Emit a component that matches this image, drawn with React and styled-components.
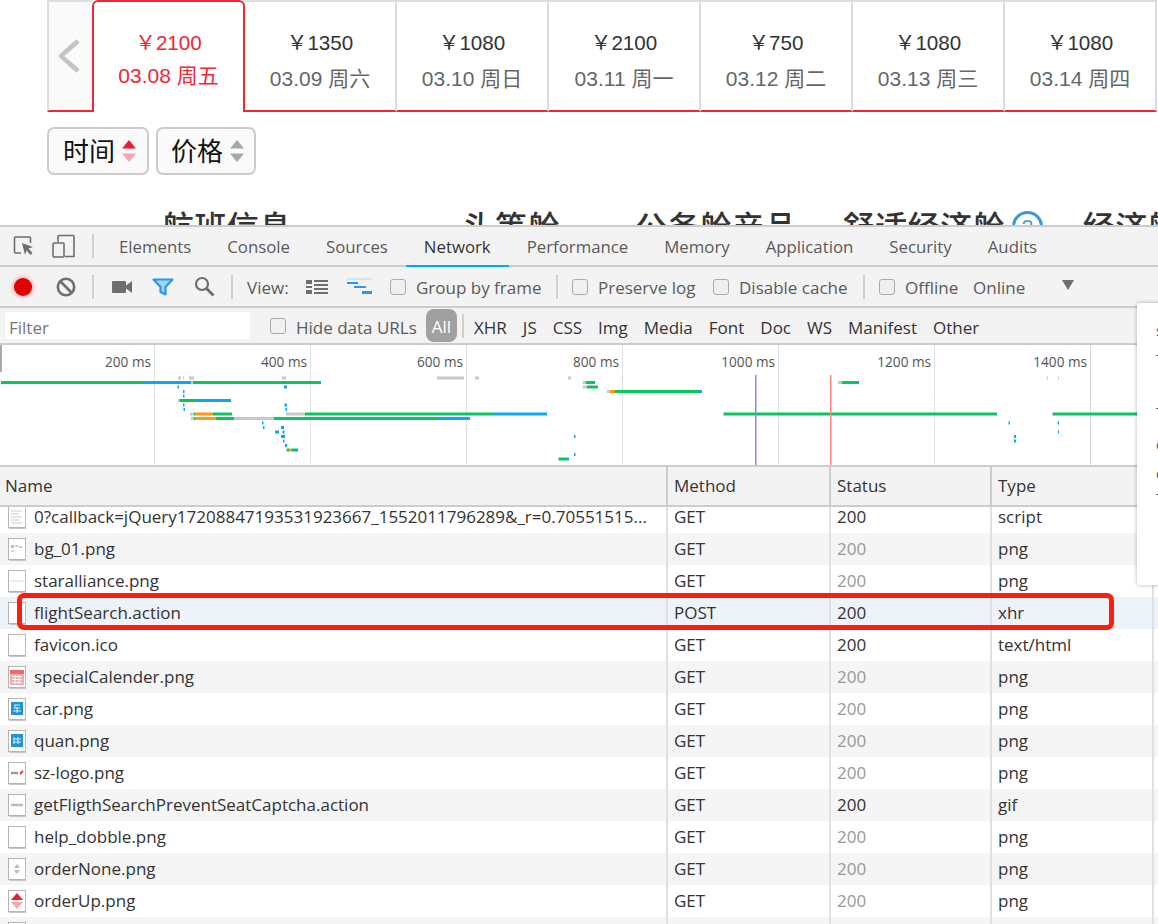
import styled, { createGlobalStyle } from 'styled-components';

const GlobalStyle = createGlobalStyle`
  html, body {
    margin: 0;
    background: #fff;
  }
  #root {
    width: 1158px;
    height: 924px;
    overflow: hidden;
    position: relative;
  }
`;

const days = [
  { price: '2100', date: '03.08 周五', active: true },
  { price: '1350', date: '03.09 周六' },
  { price: '1080', date: '03.10 周日' },
  { price: '2100', date: '03.11 周一' },
  { price: '750', date: '03.12 周二' },
  { price: '1080', date: '03.13 周三' },
  { price: '1080', date: '03.14 周四' },
];

const panels = [
  { label: 'Elements' },
  { label: 'Console' },
  { label: 'Sources' },
  { label: 'Network', active: true },
  { label: 'Performance' },
  { label: 'Memory' },
  { label: 'Application' },
  { label: 'Security' },
  { label: 'Audits' },
];

const filters = ['XHR', 'JS', 'CSS', 'Img', 'Media', 'Font', 'Doc', 'WS', 'Manifest', 'Other'];

const G = '#0cc45c';
const B = '#0aa7f5';
const O = '#f99b14';
const L = '#c8c8c8';

// [row, from, to, colour]
const bars = [
  [0, 178, 181, L], [0, 183, 184, L], [0, 189, 194, L], [0, 282, 286, L], [0, 437, 464, L], [0, 475, 479, L],
  [0, 568, 571, L], [0, 622, 623, L], [0, 1047, 1048, L], [0, 1058, 1059, L],
  [1, 1, 143, G], [1, 143, 191, B], [1, 191, 193, L], [1, 193, 319, G], [1, 319, 321, B],
  [1, 583, 586, L], [1, 586, 594, G], [1, 594, 595, B], [1, 838, 842, L], [1, 842, 857, G], [1, 857, 859, B],
  [2, 177.5, 179, B], [2, 284, 287, B], [2, 583, 587, L], [2, 587, 597, G], [2, 597, 598, B],
  [3, 183, 184.5, B], [3, 607, 610, L], [3, 610, 615, O], [3, 615, 700, G], [3, 700, 702, B],
  [4, 183, 184.5, B],
  [5, 178, 179.5, L], [5, 179.5, 195, G], [5, 195, 231, B],
  [6, 183, 184.5, B], [6, 284.5, 287, B],
  [7, 183.5, 185, B], [7, 285.5, 287, B],
  [8, 190, 194, L], [8, 194, 195, G], [8, 195, 213, O], [8, 213, 231, G], [8, 231, 232, B],
  [8, 286, 305, L], [8, 305, 494, G], [8, 494, 547, B], [8, 723, 724, L], [8, 724, 995, G], [8, 995, 997, B],
  [8, 1052, 1053, L], [8, 1053, 1138, G],
  [9, 191, 194, L], [9, 194, 195, G], [9, 195, 216, O], [9, 216, 233, G], [9, 233, 234, B],
  [9, 234, 274, L], [9, 274, 438, G], [9, 438, 470, B],
  [10, 262, 263.5, B], [10, 1008.5, 1010, B], [10, 1057.5, 1059, B],
  [11, 263, 264.5, B], [11, 281, 284, B],
  [12, 275, 279, B], [12, 282.5, 284.5, B], [12, 1058, 1059, B],
  [13, 281, 285, B], [13, 574, 575.5, B], [13, 1014, 1016, B],
  [14, 283, 284.5, B], [14, 1014, 1016, B],
  [15, 285, 287, B],
  [16, 286, 287, L], [16, 287, 289, G], [16, 289, 292, O], [16, 292, 295, G], [16, 295, 298, B],
  [17, 574, 575.5, B],
  [18, 558, 559, L], [18, 559, 567, G], [18, 567, 569, B],
];

const ticks = [
  { x: 154, label: '200 ms' },
  { x: 310, label: '400 ms' },
  { x: 466, label: '600 ms' },
  { x: 622, label: '800 ms' },
  { x: 778, label: '1000 ms' },
  { x: 934, label: '1200 ms' },
  { x: 1090, label: '1400 ms' },
];

const requests = [
  { name: '0?callback=jQuery17208847193531923667_1552011796289&_r=0.70551515...', method: 'GET', fresh: true, type: 'script', icon: 'doc' },
  { name: 'bg_01.png', method: 'GET', type: 'png', icon: 'bg' },
  { name: 'staralliance.png', method: 'GET', type: 'png', icon: 'line' },
  { name: 'flightSearch.action', method: 'POST', fresh: true, type: 'xhr', icon: 'blank', selected: true },
  { name: 'favicon.ico', method: 'GET', fresh: true, type: 'text/html', icon: 'blank' },
  { name: 'specialCalender.png', method: 'GET', type: 'png', icon: 'calendar' },
  { name: 'car.png', method: 'GET', type: 'png', icon: 'car' },
  { name: 'quan.png', method: 'GET', type: 'png', icon: 'quan' },
  { name: 'sz-logo.png', method: 'GET', type: 'png', icon: 'logo' },
  { name: 'getFligthSearchPreventSeatCaptcha.action', method: 'GET', fresh: true, type: 'gif', icon: 'captcha' },
  { name: 'help_dobble.png', method: 'GET', type: 'png', icon: 'blank' },
  { name: 'orderNone.png', method: 'GET', type: 'png', icon: 'none' },
  { name: 'orderUp.png', method: 'GET', type: 'png', icon: 'up' },
  { name: '', method: '', type: '', icon: 'blank' },
];

const FileIcon = ({ kind }) => (
  <svg width="18" height="23" viewBox="0 0 18 23">
    <rect x="0.5" y="0.5" width="17" height="21" fill="#fff" stroke="#b4b4b4" />
    <path d="M1 22.5H18V1" fill="none" stroke="#c8c8c8" />
    {kind === 'doc' && <path d="M3 5h11M3 8h8M3 11h11M3 14h9M3 17h11" stroke="#ddd" strokeWidth="1.4" />}
    {kind === 'bg' && (
      <>
        <rect x="3" y="7" width="3" height="3" fill="#f0a8a0" />
        <rect x="7" y="7" width="3" height="2" fill="#e8c890" />
        <rect x="11" y="8" width="3" height="2" fill="#ccc" />
        <rect x="3" y="12" width="4" height="2" fill="#ddd" />
      </>
    )}
    {kind === 'line' && <path d="M2 11h14" stroke="#ddd" />}
    {kind === 'calendar' && (
      <>
        <rect x="2" y="4" width="14" height="15" rx="1" fill="#f7a8ac" />
        <rect x="2" y="4" width="14" height="4" fill="#ee6b72" />
        <path d="M4 10.5h10M4 13.5h10M4 16.5h10M7 9v9M11 9v9" stroke="#fff" />
      </>
    )}
    {(kind === 'car' || kind === 'quan') && (
      <>
        <rect x="3" y="4" width="12" height="13" fill="#2093d8" />
        <path d={kind === 'car' ? 'M6 7h6M8 7l-2 3h6M9 9v6M5 13h8' : 'M6 7v7M10 7v7M5 9h8M5 12h8'} stroke="#d8eefa" fill="none" />
      </>
    )}
    {kind === 'logo' && (
      <>
        <path d="M3 11h7" stroke="#999" strokeWidth="2.4" />
        <path d="M12 12l3-3" stroke="#e53a3a" strokeWidth="2" />
      </>
    )}
    {kind === 'captcha' && <path d="M3 11h12" stroke="#bbb" strokeWidth="2.4" />}
    {kind === 'none' && (
      <>
        <path d="M9 6l3 4H6z" fill="#bbb" />
        <path d="M9 16l3-4H6z" fill="#bbb" />
      </>
    )}
    {kind === 'up' && (
      <>
        <path d="M9 3l6 7H3z" fill="#ed1c2e" />
        <path d="M9 19l6-7H3z" fill="#f7a6ad" />
      </>
    )}
  </svg>
);

const SortArrows = ({ up, down }) => (
  <svg width="14" height="22" viewBox="0 0 14 22">
    <path d="M7 0l7 8.5H0z" fill={up} />
    <path d="M7 22l7-8.5H0z" fill={down} />
  </svg>
);

const App = () => (
  <Page>
    <GlobalStyle />
    <Booking>
      <DateStrip>
        <PrevButton>
          <svg width="26" height="36" viewBox="0 0 26 36">
            <path d="M22 3L5 18l17 15" fill="none" stroke="#c4c4c4" strokeWidth="4.5" strokeLinejoin="round" />
          </svg>
        </PrevButton>
        {days.map((d) => (
          <DateTab key={d.date} $active={d.active}>
            <Price>￥{d.price}</Price>
            <DateLabel $active={d.active}>{d.date}</DateLabel>
          </DateTab>
        ))}
      </DateStrip>
      <SortRow>
        <SortButton $w={102}>
          <SortLabel>时间</SortLabel>
          <SortArrows up="#ed1c2e" down="#f7a6ad" />
        </SortButton>
        <SortButton $w={100}>
          <SortLabel>价格</SortLabel>
          <SortArrows up="#a8a8a8" down="#a8a8a8" />
        </SortButton>
      </SortRow>
      <CabinRow>
        <CabinTitle $gap={171}>航班信息</CabinTitle>
        <CabinTitle $gap={75}>头等舱</CabinTitle>
        <CabinTitle $gap={46}>公务舱产品</CabinTitle>
        <CabinTitle $gap={7}>舒适经济舱</CabinTitle>
        <HelpBadge>?</HelpBadge>
        <CabinTitle>经济舱</CabinTitle>
      </CabinRow>
    </Booking>

    <DevTools>
      <PanelTabs>
        <ToolIcon $left={13}>
          <svg width="22" height="22" viewBox="0 0 22 22" fill="none">
            <path d="M8 18H2.5a1 1 0 0 1-1-1V3a1 1 0 0 1 1-1h14a1 1 0 0 1 1 1v5" stroke="#6e6e6e" strokeWidth="1.6" />
            <path d="M9 8l11 4-4.5 1.6 4 4.4-2 2-4-4.6L12 20z" fill="#6e6e6e" />
          </svg>
        </ToolIcon>
        <ToolIcon $left={17}>
          <svg width="24" height="24" viewBox="0 0 24 24" fill="none" stroke="#6e6e6e" strokeWidth="1.6">
            <path d="M6 8V2.5a1 1 0 0 1 1-1h14a1 1 0 0 1 1 1v20H13" />
            <rect x="1" y="9" width="11" height="14" rx="1" />
          </svg>
        </ToolIcon>
        <Divider $left={16} $right={7} />
        {panels.map((p) => (
          <PanelTab key={p.label} $active={p.active}>{p.label}</PanelTab>
        ))}
      </PanelTabs>

      <Toolbar>
        <RecordDot />
        <ToolIcon $left={24}>
          <svg width="20" height="20" viewBox="0 0 20 20" fill="none" stroke="#6e6e6e" strokeWidth="2.6">
            <circle cx="10" cy="10" r="8.2" />
            <path d="M4.5 4.5l11 11" />
          </svg>
        </ToolIcon>
        <Divider $left={16} $right={18} />
        <ToolIcon>
          <svg width="20" height="14" viewBox="0 0 20 14">
            <rect x="0" y="1" width="14" height="12" rx="1" fill="#6e6e6e" />
            <path d="M14 5.5L20 1v12l-6-4.5z" fill="#6e6e6e" />
          </svg>
        </ToolIcon>
        <ToolIcon $left={20}>
          <svg width="22" height="18" viewBox="0 0 22 18">
            <path d="M1.5 1.5h19L13.5 9v7.5l-5-2.5V9z" fill="#a8d4f8" stroke="#2a96ee" strokeWidth="2.2" strokeLinejoin="round" />
          </svg>
        </ToolIcon>
        <ToolIcon $left={20}>
          <svg width="21" height="21" viewBox="0 0 21 21" fill="none" stroke="#6e6e6e" strokeWidth="2.2">
            <circle cx="8" cy="8" r="6" />
            <path d="M12.5 12.5l7 7" strokeWidth="2.8" />
          </svg>
        </ToolIcon>
        <Divider $left={16} $right={14} />
        <ToolLabel $w={42}>View:</ToolLabel>
        <ToolIcon $left={17}>
          <svg width="22" height="16" viewBox="0 0 22 16" fill="#6e6e6e">
            <rect x="0" y="1" width="6" height="4" />
            <rect x="0" y="7" width="6" height="2" />
            <rect x="0" y="11" width="6" height="4" />
            <rect x="8" y="1" width="14" height="2" />
            <rect x="8" y="5" width="14" height="2" />
            <rect x="8" y="9" width="14" height="2" />
            <rect x="8" y="13" width="14" height="2" />
          </svg>
        </ToolIcon>
        <ToolIcon $left={19}>
          <svg width="25" height="17" viewBox="0 0 25 17">
            <rect x="0" y="0" width="25" height="2" fill="#cfe6f8" />
            <rect x="0" y="4" width="11" height="2" fill="#2a96ee" />
            <rect x="7" y="8" width="12" height="2" fill="#2a96ee" />
            <rect x="15" y="13" width="10" height="3" fill="#2a96ee" />
          </svg>
        </ToolIcon>
        <Check $left={18} />
        <CheckLabel $w={125}>Group by frame</CheckLabel>
        <Divider $left={15} $right={14} />
        <Check />
        <CheckLabel $w={97}>Preserve log</CheckLabel>
        <Check $left={18} />
        <CheckLabel $w={108}>Disable cache</CheckLabel>
        <Divider $left={16} $right={14} />
        <Check />
        <CheckLabel $w={53}>Offline</CheckLabel>
        <ToolLabel $left={15} $w={52}>Online</ToolLabel>
        <Caret />
      </Toolbar>

      <FilterBar>
        <FilterInput>Filter</FilterInput>
        <Check $left={20} />
        <CheckLabel $w={121}>Hide data URLs</CheckLabel>
        <AllPill>All</AllPill>
        <Divider $left={5} $right={10} />
        <FilterTypes>
          {filters.map((f) => (
            <FilterType key={f}>{f}</FilterType>
          ))}
        </FilterTypes>
      </FilterBar>

      <Overview>
        <svg width="1158" height="120" viewBox="0 345 1158 120">
          <rect x="0" y="345" width="2" height="27" fill="#aaa" />
          {ticks.map((t) => (
            <g key={t.x}>
              <rect x={t.x} y="345" width="1" height="120" fill={t.x === 1090 ? '#d8d8d8' : '#e2e2e2'} />
              <text x={t.x - 3} y="367" textAnchor="end" fontFamily="'Open Sans', sans-serif" fontSize="13.6" fill="#555">{t.label}</text>
            </g>
          ))}
          {bars.map(([row, from, to, colour]) => (
            <rect
              key={`${row}-${from}`}
              x={from}
              y={376.5 + row * 4.5}
              width={to - from}
              height="3"
              fill={colour}
            />
          ))}
          <rect x="755" y="375" width="1.5" height="90" fill="#8a8aee" />
          <rect x="830" y="375" width="1.5" height="90" fill="#ff8585" />
        </svg>
      </Overview>

      <TableHead>
        <HeadCell>Name</HeadCell>
        <HeadCell>Method</HeadCell>
        <HeadCell>Status</HeadCell>
        <HeadCell>Type</HeadCell>
        <HeadCell />
      </TableHead>
      <TableBody>
        {requests.map((r, i) => (
          <Row key={r.name || i} $stripe={i % 2 === 1} $selected={r.selected}>
            <NameCell>
              <FileIcon kind={r.icon} />
              <NameText>{r.name}</NameText>
            </NameCell>
            <Cell>{r.method}</Cell>
            <Cell $muted={!r.fresh}>{r.name ? '200' : ''}</Cell>
            <Cell>{r.type}</Cell>
            <Cell />
          </Row>
        ))}
      </TableBody>
    </DevTools>

    <Throttling>
      <ThrottleLine $h={29}>s</ThrottleLine>
      <ThrottleLine $h={53}>T</ThrottleLine>
      <ThrottleLine $h={32}>T</ThrottleLine>
      <ThrottleLine $h={29}>c</ThrottleLine>
      <ThrottleLine $h={25}>c</ThrottleLine>
      <ThrottleLine $h={33}>T</ThrottleLine>
    </Throttling>
    <Highlight />
  </Page>
);

export default App;

const Page = styled.div`
  width: 1158px;
  height: 924px;
  overflow: hidden;
  position: relative;
  font-family: 'Liberation Sans', 'Noto Sans CJK SC', sans-serif;
`;

const Booking = styled.div`
  height: 225px;
  overflow: hidden;
  padding-left: 47px;
  box-sizing: border-box;
`;

const DateStrip = styled.div`
  display: flex;
  height: 112px;
  width: 1111px;
  box-sizing: border-box;
`;

const PrevButton = styled.div`
  width: 45px;
  box-sizing: border-box;
  padding-right: 3px;
  display: flex;
  align-items: center;
  justify-content: center;
  background: #fafafa;
  border-top: 2px solid #ddd;
  border-left: 2px solid #ddd;
  border-bottom: 2px solid #ee2737;
`;

const DateTab = styled.div`
  width: ${(p) => (p.$active ? '153px' : '152px')};
  flex: none;
  box-sizing: border-box;
  display: flex;
  flex-direction: column;
  align-items: center;
  padding-top: 29px;
  color: ${(p) => (p.$active ? '#ee2737' : '#333')};
  background: #fff;
  border-top: 2px solid ${(p) => (p.$active ? '#ee2737' : '#ddd')};
  border-right: 2px solid ${(p) => (p.$active ? '#ee2737' : '#ddd')};
  border-left: ${(p) => (p.$active ? '2px solid #ee2737' : '0')};
  border-bottom: ${(p) => (p.$active ? '0' : '2px solid #ee2737')};
  border-radius: ${(p) => (p.$active ? '6px 6px 0 0' : '0')};
`;

const Price = styled.div`
  font-size: 20.6px;
  line-height: 24px;
`;

const DateLabel = styled.div`
  margin-top: ${(p) => (p.$active ? '9px' : '12px')};
  font-size: 21px;
  line-height: 24px;
  color: ${(p) => (p.$active ? '#ee2737' : '#666')};
`;

const SortRow = styled.div`
  display: flex;
  gap: 7px;
  margin-top: 15px;
`;

const SortButton = styled.div`
  width: ${(p) => p.$w}px;
  height: 48px;
  box-sizing: border-box;
  padding-left: 3px;
  display: flex;
  align-items: center;
  justify-content: center;
  gap: 7px;
  background: #fafafa;
  border: 2px solid #ccc;
  border-radius: 7px;
  color: #111;
  font-size: 26px;
`;

const SortLabel = styled.span`
  margin-bottom: 4px;
`;

const CabinRow = styled.div`
  display: flex;
  align-items: flex-start;
  margin-top: 31px;
  padding-left: 115px;
  width: 1300px;
`;

const CabinTitle = styled.div`
  flex: none;
  margin-right: ${(p) => p.$gap || 0}px;
  font-size: 32px;
  line-height: 44px;
  font-weight: 500;
  color: #333;
  letter-spacing: 0.4px;
`;

const HelpBadge = styled.div`
  flex: none;
  width: 31px;
  height: 31px;
  box-sizing: border-box;
  margin: 5px 40px 0 0;
  border: 3px solid #3a9ad9;
  border-radius: 50%;
  color: #3a9ad9;
  font-size: 20px;
  line-height: 26px;
  text-align: center;
`;

const DevTools = styled.div`
  height: 699px;
  overflow: hidden;
  font-family: 'Open Sans', 'Noto Sans', sans-serif;
  color: #333;
`;

const barBase = `
  display: flex;
  align-items: center;
  box-sizing: border-box;
  background: #f3f3f3;
  border-bottom: 2px solid #ccc;
  font-size: 17px;
  color: #5a5a5a;
`;

const PanelTabs = styled.div`
  ${barBase}
  height: 42px;
  border-top: 2px solid #ccc;
`;

const ToolIcon = styled.div`
  display: flex;
  flex: none;
  margin-left: ${(p) => p.$left || 0}px;
`;

const Divider = styled.div`
  flex: none;
  width: 2px;
  height: 24px;
  background: #d0d0d0;
  margin-left: ${(p) => p.$left || 0}px;
  margin-right: ${(p) => p.$right || 0}px;
`;

const PanelTab = styled.div`
  align-self: stretch;
  display: flex;
  align-items: center;
  padding: 1px 18px 0;
  font-size: 16.8px;
  color: ${(p) => (p.$active ? '#333' : '#5a5a5a')};
  border-bottom: 2px solid ${(p) => (p.$active ? '#03a9f4' : 'transparent')};
  margin-bottom: -2px;
`;

const Toolbar = styled.div`
  ${barBase}
  height: 41px;
`;

const RecordDot = styled.div`
  flex: none;
  width: 18px;
  height: 18px;
  margin-left: 14px;
  border-radius: 50%;
  background: #e00000;
  box-shadow: 0 0 4px 1px rgba(224, 0, 0, 0.35);
`;

const ToolLabel = styled.div`
  flex: none;
  margin-left: ${(p) => p.$left || 0}px;
  padding-top: 1px;
  ${(p) => (p.$w ? `width: ${p.$w}px;` : '')}
  white-space: nowrap;
`;

const Check = styled.div`
  flex: none;
  width: 16px;
  height: 16px;
  box-sizing: border-box;
  margin-left: ${(p) => p.$left || 0}px;
  background: #f0f0f0;
  border: 1.5px solid #aaa;
  border-radius: 3px;
`;

const CheckLabel = styled.div`
  flex: none;
  width: ${(p) => p.$w}px;
  margin-left: 10px;
  padding-top: 1px;
  white-space: nowrap;
`;

const Caret = styled.div`
  flex: none;
  width: 0;
  height: 0;
  margin: -4px 0 0 37px;
  border-left: 6px solid transparent;
  border-right: 6px solid transparent;
  border-top: 10px solid #6e6e6e;
`;

const FilterBar = styled.div`
  ${barBase}
  height: 37px;

  ${CheckLabel} {
    padding-top: 3px;
  }
`;

const FilterInput = styled.div`
  flex: none;
  width: 245px;
  height: 27px;
  margin-left: 5px;
  padding-left: 4px;
  box-sizing: border-box;
  background: #fff;
  color: #777;
  line-height: 31px;
`;

const AllPill = styled.div`
  flex: none;
  width: 31px;
  height: 33px;
  margin-left: 9px;
  border-radius: 8px;
  background: #a0a0a0;
  color: #fff;
  line-height: 35px;
  text-align: center;
`;

const FilterTypes = styled.div`
  display: flex;
  gap: 16px;
  padding-top: 3px;
`;

const FilterType = styled.div`
  color: #333;
  white-space: nowrap;
`;

const Overview = styled.div`
  height: 122px;
  box-sizing: border-box;
  border-bottom: 2px solid #ccc;
  background: #fff;
  svg {
    display: block;
  }
`;

const columns = '668px 163px 161px 162px 1fr';

const TableHead = styled.div`
  display: grid;
  grid-template-columns: ${columns};
  height: 40px;
  box-sizing: border-box;
  background: #f3f3f3;
  border-bottom: 2px solid #ccc;
  font-size: 17px;
`;

const HeadCell = styled.div`
  display: flex;
  align-items: center;
  padding: 0 0 2px 6px;
  box-sizing: border-box;
  border-right: 2px solid #ccc;
  color: #333;

  &:first-child {
    padding-left: 5px;
  }
`;

const TableBody = styled.div`
  height: 420px;
  overflow: hidden;
  > div:first-child {
    margin-top: -6px;
  }
`;

const Row = styled.div`
  display: grid;
  grid-template-columns: ${columns};
  height: 32px;
  font-size: 17px;
  background: ${(p) => (p.$selected ? '#eef2f9' : p.$stripe ? '#f5f5f5' : '#fff')};
`;

const Cell = styled.div`
  display: flex;
  align-items: center;
  min-width: 0;
  padding-left: 6px;
  padding-bottom: 2px;
  box-sizing: border-box;
  border-right: 2px solid #e0e0e0;
  color: ${(p) => (p.$muted ? '#999' : '#333')};
  white-space: nowrap;
`;

const NameCell = styled(Cell)`
  padding-left: 8px;
  gap: 8px;

  svg {
    flex: none;
    margin-top: 2px;
  }
`;

const NameText = styled.span`
  overflow: hidden;
`;

const Throttling = styled.div`
  position: absolute;
  left: 1137px;
  top: 303px;
  width: 60px;
  height: 282px;
  box-sizing: border-box;
  padding: 18px 0 0 19px;
  background: #fff;
  border-radius: 3px;
  box-shadow: 0 0 4px rgba(0, 0, 0, 0.3);
  font-family: 'Open Sans', sans-serif;
  font-size: 14px;
  color: #555;
`;

const ThrottleLine = styled.div`
  height: ${(p) => p.$h}px;
`;

const Highlight = styled.div`
  position: absolute;
  left: 17px;
  top: 593px;
  width: 1097px;
  height: 37px;
  box-sizing: border-box;
  border: 5px solid #fb1e10;
  border-radius: 7px;
`;
